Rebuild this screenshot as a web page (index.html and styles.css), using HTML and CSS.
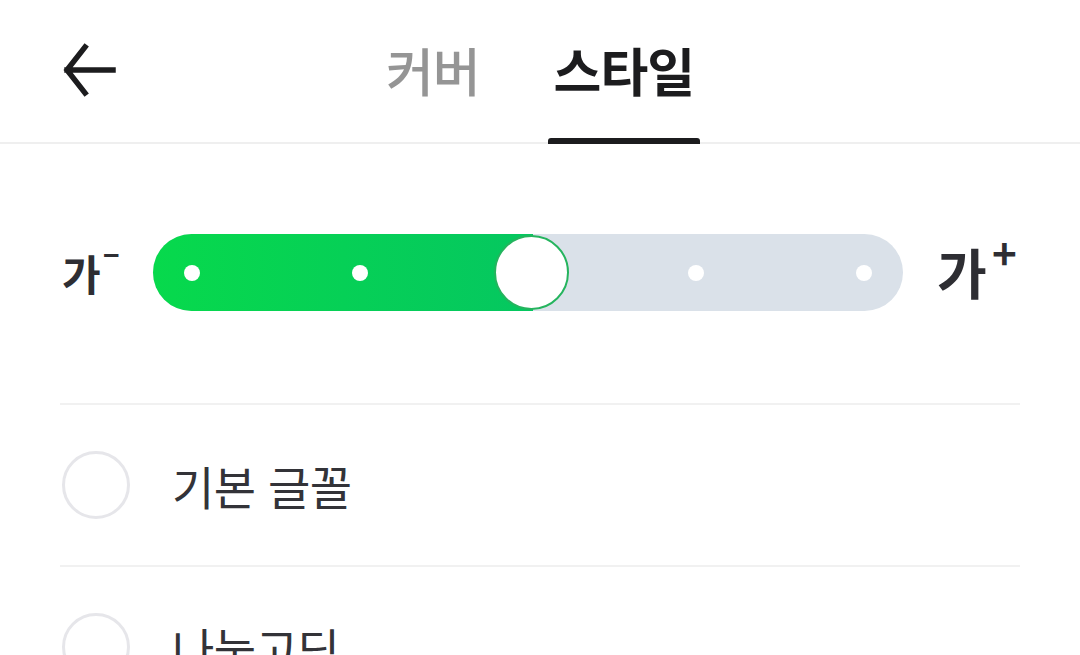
FILE: index.html
```html
<!DOCTYPE html>
<html lang="ko">
<head>
  <meta charset="UTF-8">
  <title>스타일</title>
  <link rel="stylesheet" href="styles.css">
</head>
<body>

  <header class="topbar">
    <a class="back" href="#">
      <svg width="56" height="56" viewBox="0 0 56 56">
        <path d="M52 28H6M24 5L6 28l18 23" fill="none" stroke="#1c1c1e" stroke-width="5.5" stroke-linecap="square"/>
      </svg>
    </a>
    <nav class="tabs">
      <a class="tab" href="#">커버</a>
      <a class="tab active" href="#">스타일</a>
    </nav>
    <div></div>
  </header>

  <section class="size-row">
    <span class="size-label small">가<span class="mark">−</span></span>
    <div class="track">
      <div class="fill"></div>
      <span class="dot"></span>
      <span class="dot"></span>
      <span class="dot hidden"></span>
      <span class="dot"></span>
      <span class="dot"></span>
      <span class="thumb"></span>
    </div>
    <span class="size-label big">가<span class="mark">+</span></span>
  </section>

  <ul class="fonts">
    <li><span class="radio"></span>기본 글꼴</li>
    <li><span class="radio"></span>나눔고딕</li>
  </ul>

</body>
</html>
```

FILE: styles.css
```css
* {
  margin: 0;
  padding: 0;
  box-sizing: border-box;
}

body {
  font-family: "Noto Sans CJK KR", "Noto Sans", sans-serif;
  background: #fff;
  color: #333338;
  overflow: hidden;
}

a {
  text-decoration: none;
}

.topbar {
  display: grid;
  grid-template-columns: 1fr auto 1fr;
  align-items: stretch;
  height: 144px;
  border-bottom: 2px solid #efefef;
}

.back {
  display: flex;
  align-items: center;
  padding-left: 61px;
  padding-bottom: 2px;
}

.tabs {
  display: flex;
  gap: 62px;
}

.tab {
  position: relative;
  display: flex;
  align-items: center;
  padding: 0 6px 4px;
  font-size: 52px;
  font-weight: 500;
  color: #959595;
  letter-spacing: -1px;
}

.tab.active {
  color: #1c1c1e;
  font-weight: 700;
}

.tab.active::after {
  content: '';
  position: absolute;
  left: 0;
  right: 0;
  bottom: -2px;
  height: 6px;
  border-radius: 3px 3px 0 0;
  background: #1c1c1e;
}

.size-row {
  display: flex;
  align-items: flex-start;
  padding: 90px 60px 0 62px;
  height: 259px;
}

.size-label {
  font-weight: 700;
  color: #2e2e33;
  line-height: 1;
  position: relative;
}

.size-label.small {
  width: 91px;
  font-size: 42px;
  margin-top: 18px;
}

.size-label.big {
  font-size: 54px;
  margin-left: 34px;
  margin-top: 11px;
}

.size-label .mark {
  position: absolute;
  line-height: 1;
}

.size-label.small .mark {
  left: 41px;
  top: -12px;
  font-size: 28px;
  font-weight: 700;
}

.size-label.big .mark {
  left: 55px;
  top: -14px;
  font-size: 42px;
}

.track {
  position: relative;
  width: 750px;
  height: 77px;
  border-radius: 39px;
  background: #dae1e9;
  display: flex;
  align-items: center;
  justify-content: space-between;
  padding: 0 31px;
}

.fill {
  position: absolute;
  left: 0;
  top: 0;
  bottom: 0;
  width: 380px;
  border-radius: 39px 0 0 39px;
  background: linear-gradient(90deg, #07d94c, #05c760);
}

.dot {
  position: relative;
  width: 16px;
  height: 16px;
  border-radius: 50%;
  background: #fff;
}

.dot.hidden {
  visibility: hidden;
}

.thumb {
  position: absolute;
  left: 341px;
  top: 1px;
  width: 75px;
  height: 75px;
  border-radius: 50%;
  background: #fff;
  border: 2.5px solid #25b45e;
}

.fonts {
  list-style: none;
  margin: 0 60px;
}

.fonts li {
  display: flex;
  align-items: center;
  gap: 42px;
  height: 162px;
  border-top: 2px solid #f1f1f1;
  padding: 0 0 1px 2px;
  font-size: 46px;
  color: #333338;
  letter-spacing: -0.5px;
}

.radio {
  width: 68px;
  height: 68px;
  border-radius: 50%;
  border: 3px solid #e6e6ea;
}
```
